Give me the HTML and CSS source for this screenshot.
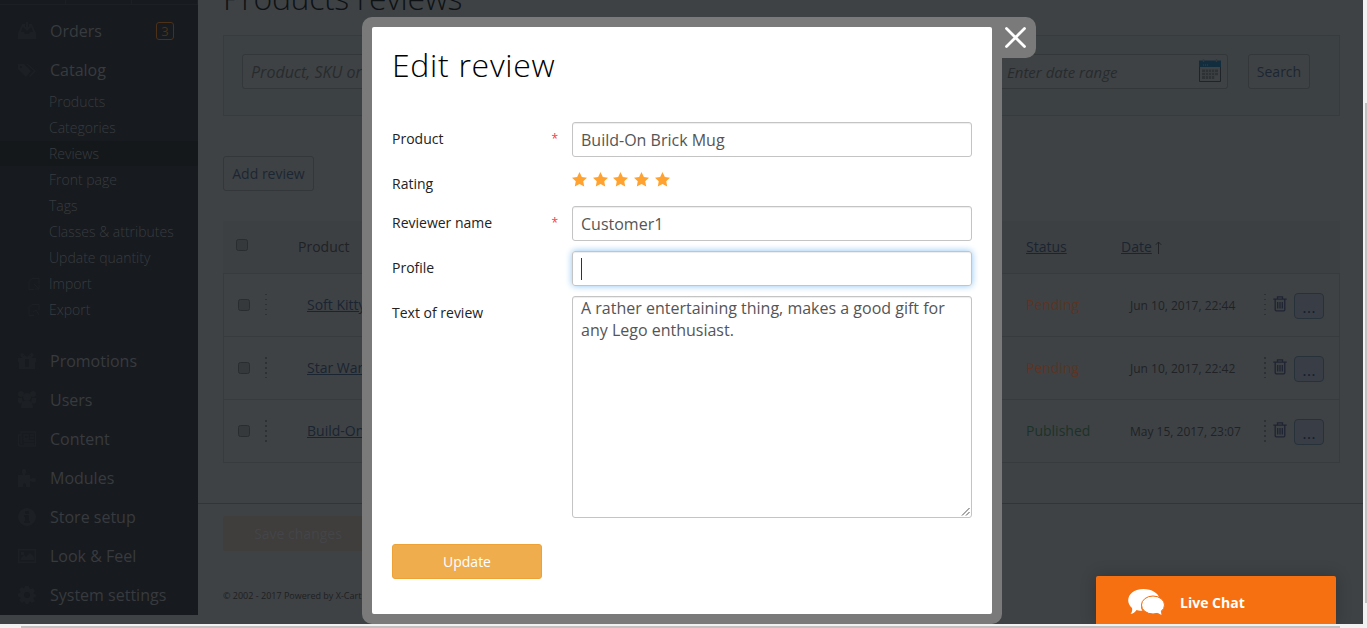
FILE: index.html
```html
<!DOCTYPE html>
<html lang="en">
<head>
<meta charset="utf-8">
<title>Edit review</title>
<link rel="stylesheet" href="styles.css">
</head>
<body>
<svg class="defs" width="0" height="0">
  <symbol id="star" viewBox="0 0 16 16"><path d="M8 0l2.500 5.200 5.500.8-4 3.900 1 5.600L8 12.900l-5 2.600 1-5.600L0 6l5.500-.8z"/></symbol>
  <symbol id="trash" viewBox="0 0 14 16"><path d="M.3 3.200h13.400M4.500 3V.9h5V3M2.200 3.500v10.300q0 1 1 1h7.600q1 0 1-1V3.500M4.700 6v6.500M7 6v6.500M9.300 6v6.500" fill="none" stroke="currentColor" stroke-width="1.300"/></symbol>
</svg>
<div class="app">
  <nav class="sidebar">
    <div class="top-tabs"><i></i><i></i><i></i></div>
    <ul class="menu">
      <li class="item"><svg viewBox="0 0 18 18"><path d="M0 11L4 2h3v3H5l-2 5h3l1 2h4l1-2h3l-2-5h-2V2h3l4 9v6H0zM8 0h2v5h3L9 9 5 5h3z"/></svg><span>Orders</span><b class="badge">3</b></li>
      <li class="item"><svg viewBox="0 0 18 18"><path fill-rule="evenodd" d="M0 3h6l7 7-5 6-8-8zM2 5v2h2V5zM8 3h2l8 7-6 6-1-1 5-5z"/></svg><span>Catalog</span></li>
      <li class="sub">Products</li>
      <li class="sub">Categories</li>
      <li class="sub active">Reviews</li>
      <li class="sub">Front page</li>
      <li class="sub">Tags</li>
      <li class="sub">Classes &amp; attributes</li>
      <li class="sub">Update quantity</li>
      <li class="sub file"><svg viewBox="0 0 12 12"><path d="M6 11.500H1v-8l3-3h7V6M6 6l5 5M11 7v4H7" fill="none" stroke="currentColor"/></svg>Import</li>
      <li class="sub file"><svg viewBox="0 0 12 12"><path d="M6 11.500H1v-8l3-3h7V6M5 8l3-2 3 5" fill="none" stroke="currentColor"/></svg>Export</li>
      <li class="item gap"><svg viewBox="0 0 18 18"><path fill-rule="evenodd" d="M0 6h5C0 4 3-1 6 2l3 3 3-3c3-3 6 2 1 4h5v4h-1v7H1v-7H0zM7 7v8h4V7zM5 3v1h2zM13 3l-2 1h2z"/></svg><span>Promotions</span></li>
      <li class="item"><svg viewBox="0 0 18 18"><circle cx="3" cy="3" r="3"/><circle cx="15" cy="3" r="3"/><circle cx="9" cy="6" r="4"/><path d="M0 7h4l1 4-3 2-2-2zM18 7h-4l-1 4 3 2 2-2zM3 17q0-6 3-7h6q3 1 3 7z"/></svg><span>Users</span></li>
      <li class="item"><svg viewBox="0 0 18 18"><path d="M3 2h14.500v14H2q-1.500 0-1.500-2V5H3zv12M6 5h4v4H6zM12 5h4M12 8h4M6 11h10M6 14h10" fill="none" stroke="currentColor" stroke-width="1.400"/></svg><span>Content</span></li>
      <li class="item"><svg viewBox="0 0 18 18"><path d="M0 6h5C3 2 4 0 6 0s3 2 1 6h5v4c4-2 6-1 6 1s-2 3-6 1v6H8c1-5-4-5-3 0H0z"/></svg><span>Modules</span></li>
      <li class="item"><svg viewBox="0 0 18 18"><path fill-rule="evenodd" d="M9 0a9 9 0 100 18A9 9 0 009 0zM7 3h4v3H7zM6 7h5v6h1v2H6v-2h1V9H6z"/></svg><span>Store setup</span></li>
      <li class="item"><svg viewBox="0 0 18 18"><path fill-rule="evenodd" d="M0 2h18v14H0zm1.500 1.500v11h15v-11zM3 13v-2l3-3 2 2 4-4 4 4v3zM3 5h3v3H3z"/></svg><span>Look &amp; Feel</span></li>
      <li class="item"><svg viewBox="0 0 18 18"><path fill-rule="evenodd" d="M7 0h4l.5 2.500 1.500.5L15 2l2 3-1.500 2 .5 1 2 .5v2L16 11.500l-.5 1L17 15l-3 2-2-1.500-1 .5-.5 2h-3L7 16l-1-.5L4 17l-3-3 1.500-2-.5-1-2-.5v-3L2 7l.5-1L1 4l3-3 2 1.500zM9 6a3 3 0 100 6 3 3 0 000-6z"/></svg><span>System settings</span></li>
    </ul>
  </nav>

  <main class="main">
    <h1 class="page-title">Products reviews</h1>
    <section class="filter">
      <div class="field keyword">Product, SKU or</div>
      <div class="field range"><span>Enter date range</span>
        <svg class="calendar" width="22" height="24" viewBox="0 0 22 24"><path d="M.5 7.500v15h21v-15" fill="none" stroke="#202327"/><path d="M0 1.500h22V8H0z" fill="#122d3e"/><path d="M4.500 0v3M17.500 0v3" stroke="#34383b" stroke-width="1.500"/><path d="M4 6h1m1 0h1m1 0h1" stroke="#2d4656"/><path d="M3 10.500h16v6H3zM3 16h13v4H3z" fill="#2e3235"/><path d="M3 13.500h16M3 16.500h16M6.500 10v10M9.500 10v10M12.500 10v10M15.500 10v10" stroke="#3a3e41" stroke-width="1"/></svg>
      </div>
      <div class="btn search">Search</div>
    </section>
    <div class="btn add">Add review</div>
    <section class="table">
      <div class="thead"><i class="check"></i><span>Product</span><u class="th-status">Status</u><span class="th-date"><u>Date</u><svg width="7" height="13" viewBox="0 0 7 13"><path d="M3.500 13V1M.8 3.800L3.500 1l2.700 2.800" fill="none" stroke="currentColor"/></svg></span></div>
      <div class="row"><i class="check"></i><i class="dots"></i><u>Soft Kitty</u><span class="pending">Pending</span><span class="date">Jun 10, 2017, 22:44</span><i class="dots"></i><svg class="trash"><use href="#trash"/></svg><span class="more">...</span></div>
      <div class="row"><i class="check"></i><i class="dots"></i><u>Star Wars</u><span class="pending">Pending</span><span class="date">Jun 10, 2017, 22:42</span><i class="dots"></i><svg class="trash"><use href="#trash"/></svg><span class="more">...</span></div>
      <div class="row"><i class="check"></i><i class="dots"></i><u>Build-On</u><span class="published">Published</span><span class="date">May 15, 2017, 23:07</span><i class="dots"></i><svg class="trash"><use href="#trash"/></svg><span class="more">...</span></div>
    </section>
    <footer class="footer">
      <div class="save">Save changes</div>
      <p class="copy">© 2002 - 2017 Powered by X-Cart</p>
    </footer>
  </main>

  <div class="modal">
    <div class="close"><svg width="21" height="21" viewBox="0 0 21 21"><path d="M1.500 1.500l18 18M19.500 1.500l-18 18" stroke="#fff" stroke-width="2.800" stroke-linecap="round"/></svg></div>
    <div class="dialog">
      <h2>Edit review</h2>
      <div class="form">
        <label>Product<b>*</b></label><div class="input">Build-On Brick Mug</div>
        <label class="l-rating">Rating</label>
        <div class="stars"><svg><use href="#star"/></svg><svg><use href="#star"/></svg><svg><use href="#star"/></svg><svg><use href="#star"/></svg><svg><use href="#star"/></svg></div>
        <label>Reviewer name<b>*</b></label><div class="input">Customer1</div>
        <label>Profile</label><div class="input focus"><i class="caret"></i></div>
        <label>Text of review</label>
        <div class="input area"><p>A rather entertaining thing, makes a good gift for any Lego enthusiast.</p><svg width="9" height="9" viewBox="0 0 9 9"><path d="M1 8.500L8.500 1M5 8.500L8.500 5" stroke="#555"/></svg></div>
      </div>
      <div class="update">Update</div>
    </div>
  </div>

  <div class="chat">
    <svg width="37" height="27" viewBox="0 0 37 27"><path d="M15.500 0C24 0 30 4.500 31 8c-8-2.500-18 1.500-18 9.500 0 2 .5 3 1.500 4-2 .4-4 .3-6-.5-1 1.500-3 3.500-6 4 1.500-2 2-3.500 1.500-6C-4 12 1 0 15.500 0z"/><ellipse cx="25" cy="16" rx="11.500" ry="9"/><path d="M28 23l5.500 3-1-6z"/></svg>
    <span>Live Chat</span>
  </div>
  <div class="vscroll"><i></i></div>
  <div class="hscroll"><i></i></div>
</div>
</body>
</html>
```
FILE: styles.css
```css
* { box-sizing: border-box; }
body { margin: 0; font: 14px/20px "Open Sans", sans-serif; }
h1, h2, p, ul { margin: 0; padding: 0; font-weight: 400; }
i { font-style: normal; }
.defs { position: absolute; }
.app { position: relative; display: flex; width: 1367px; height: 628px; overflow: hidden; background: #3e4245; }

/* Sidebar */
.sidebar { flex: none; width: 198px; height: 615px; background: #171a1e; }
.top-tabs { display: flex; height: 5px; border-bottom: 1px solid #1c2024; }
.top-tabs i { width: 66px; border-right: 1px solid #1c2024; }
.menu { list-style: none; padding-top: 6px; }
.item { display: flex; align-items: center; height: 39px; padding-left: 18px; font-size: 16px; color: #373b3f; }
.item svg { width: 18px; height: 18px; margin-right: 14px; fill: #1c2024; color: #1c2024; }
.badge { margin-left: auto; margin-right: 24px; width: 18px; height: 18px; border: 1px solid #4d3018; border-radius: 3px; font: 13px/16px "Open Sans", sans-serif; text-align: center; color: #4d3018; }
.sub { display: flex; align-items: center; height: 26px; padding-left: 49px; font-weight: 300; color: #373c40; }
.sub.active { background: linear-gradient(#15181b, #15181b) 0 0 / 100% 25px no-repeat; }
.sub.file { padding-left: 28px; }
.file svg { width: 12px; height: 12px; margin-right: 9px; color: #1c2024; }
.gap { margin-top: 18px; }

/* Page content */
.main { flex: 1; min-width: 0; height: 624px; overflow: hidden; }
.page-title { height: 35px; margin: -22px 0 22px 25px; font-size: 32px; font-weight: 300; letter-spacing: -.35px; line-height: 40px; color: #0f1214; }
.filter { display: flex; align-items: center; width: 1117px; height: 81px; margin-left: 25px; padding: 0 29px 9px 18px; border: 1px solid #373b3e; background: #3c4144; }
.field { height: 35px; border: 1px solid #333739; border-radius: 3px; background: #3e4244; font-size: 16px; font-style: italic; line-height: 34px; padding-left: 8px; color: #282b2d; }
.keyword { width: 400px; }
.range { display: flex; align-items: center; width: 300px; margin-left: auto; padding: 0 6px 0 78px; font-size: 15px; }
.range span { padding-top: 1px; }
.calendar { margin-left: auto; }
.btn { height: 35px; border: 1px solid #333739; border-radius: 3px; line-height: 34px; text-align: center; color: #1c2633; background: #3e4244; }
.search { width: 62px; margin-left: 20px; }
.add { width: 91px; margin: 40px 0 30px 25px; }
.table { width: 1117px; margin-left: 25px; color: #202226; }
.thead { display: grid; grid-template-columns: 62px 728px 95px 1fr; align-items: center; height: 52px; padding-left: 13px; background: #3c4043; }
.th-date { display: flex; align-items: center; gap: 3px; }
.thead u { color: #1b2431; }
.row { display: grid; grid-template-columns: 27px 42px 719px 104px 134px 9px 21px 30px; align-items: center; height: 63px; padding-left: 14px; border: 1px solid #373b3e; border-bottom: 0; }
.row:last-child { height: 64px; border-bottom: 1px solid #373b3e; }
.row u { color: #1b2431; }
.check { width: 12px; height: 12px; border: 1px solid #2a2d2f; border-radius: 2.500px; background: #36393c; }
.thead .check { margin-top: -5px; }
.dots { width: 2px; height: 22px; background: repeating-linear-gradient(#2e3134 0 1.500px, transparent 1.500px 5px); }
.pending { color: #5c3424; }
.published { color: #1d3227; }
.date { font-size: 12px; padding-top: 2px; }
.trash { width: 14px; height: 16px; margin-top: -3px; color: #1f2433; }
.more { height: 26px; margin-top: 1px; border: 1px solid #273139; border-radius: 4px; background: #393e46; text-align: center; font-size: 17px; line-height: 25px; color: #16202e; }
.footer { margin-top: 40px; padding: 12px 0 0 25px; border-top: 1px solid #313538; }
.save { width: 150px; height: 35px; border-radius: 3px; background: #3f3e3c; font-size: 14px; font-weight: 500; line-height: 35px; text-align: center; color: #434548; }
.copy { margin-top: 35px; font-size: 9px; color: #1e2021; }

/* Dialog */
.modal { position: absolute; left: 362px; top: 17px; width: 640px; height: 607px; padding: 10px; border-radius: 10px 0 10px 10px; background: #7a7a7a; }
.dialog { height: 587px; padding: 19px 20px 0; border-radius: 2px; background: #fff; }
.close { position: absolute; left: 630px; top: 0; width: 44px; height: 41px; padding: 10px 0 0 13px; border-radius: 0 10px 10px 0; background: #7a7a7a; }
.close svg { display: block; }
.dialog h2 { font-size: 32px; font-weight: 300; letter-spacing: .7px; line-height: 37px; height: 40px; color: #000; }
.form { display: grid; grid-template-columns: 180px 400px; grid-template-rows: 35px 29px 35px 35px 222px; row-gap: 10px; margin-top: 36px; }
.form label { display: flex; justify-content: space-between; padding: 7px 14px 0 0; color: #222; }
.form label b { font-size: 12px; font-weight: 400; color: #f0404e; }
.stars { display: flex; gap: 5.700px; padding-top: 5px; }
.stars svg { width: 15px; height: 15px; fill: #ffa230; }
.input { padding: 0 8px; border: 1px solid #c4c4c4; border-radius: 3px; font-size: 16px; line-height: 34px; color: #555; box-shadow: inset 0 1px 1px rgba(0,0,0,.075); }
.focus { display: flex; align-items: center; box-shadow: inset 0 1px 1px rgba(0,0,0,.075), 0 0 7px #8dc4f0; }
.caret { width: 1px; height: 22px; background: #333; }
.area { display: flex; flex-direction: column; justify-content: space-between; line-height: 22px; }
.area svg { align-self: flex-end; margin-right: -7px; margin-bottom: 1px; }
.update { width: 150px; height: 35px; margin-top: 26px; border: 1px solid #eea236; border-radius: 3px; background: #f0ad4e; line-height: 34px; text-align: center; font-weight: 500; color: #fff; }

/* Chat tab */
.chat { position: absolute; left: 1096px; top: 576px; width: 240px; height: 48px; display: flex; align-items: center; padding: 5px 0 0 32px; border-radius: 2px 2px 0 0; background: #f66f10; box-shadow: 0 0 16px rgba(0,0,0,.22); font-weight: 700; color: #fff; }
.chat svg { margin-right: 15px; fill: #fff; }
.chat svg ellipse { stroke: #f66f10; stroke-width: 1; }

/* Window scrollbars */
.vscroll, .hscroll { position: absolute; background: #f1f1f1; }
.vscroll { right: 0; top: 0; width: 4px; height: 624px; padding: 103px 0 0 2px; }
.vscroll i { display: block; height: 500px; background: #c1c1c1; }
.hscroll { left: 0; bottom: 0; width: 1367px; height: 4px; padding: 2px 0 0 21px; }
.hscroll i { display: block; width: 1319px; height: 2px; background: #c1c1c1; }
```
